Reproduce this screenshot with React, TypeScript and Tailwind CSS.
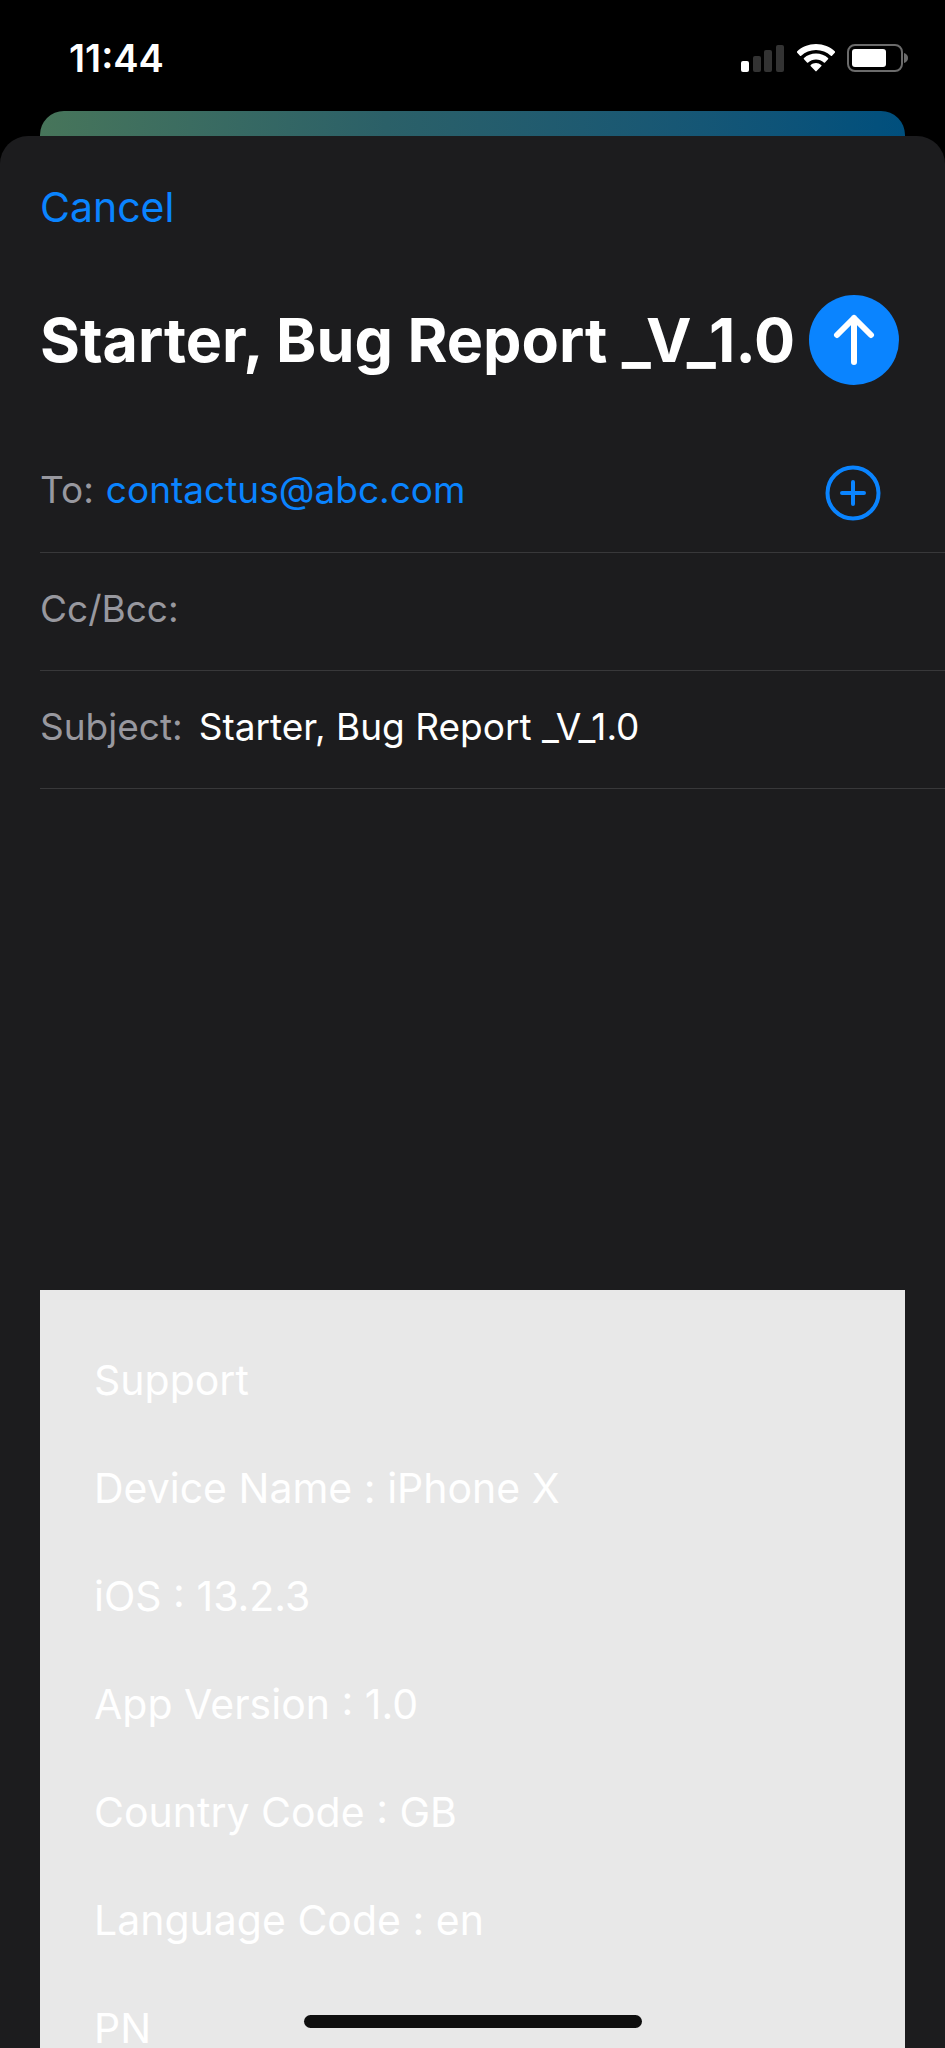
const details = [
  "Support",
  "Device Name : iPhone X",
  "iOS : 13.2.3",
  "App Version : 1.0",
  "Country Code : GB",
  "Language Code : en",
  "PN",
];

function StatusBar() {
  return (
    <header className="flex h-[111px] shrink-0 items-start justify-between pt-9 pr-9 pl-[69px] text-white">
      <time className="text-[38px] leading-[44px] font-semibold">11:44</time>
      <div className="flex items-start gap-3 pt-2">
        <svg width="44" height="28" viewBox="0 0 44 28" role="img" aria-label="Signal">
          <rect x="0" y="17" width="8" height="11" rx="2" fill="#fff" />
          <rect x="12" y="12" width="8" height="16" rx="2" fill="#333" />
          <rect x="23" y="6" width="8" height="22" rx="2" fill="#333" />
          <rect x="35" y="1" width="8" height="27" rx="2" fill="#333" />
        </svg>
        <svg width="38" height="28" viewBox="1 0 38 28" role="img" aria-label="Wi-Fi" fill="#fff">
          <path d="M20 0C12.600 0 5.900 2.800 1 7.400a.8.800 0 0 0 0 1.200l3 3.100a.8.800 0 0 0 1.200 0C9.100 8.100 14.300 6 20 6s10.900 2.100 14.800 5.700a.8.800 0 0 0 1.200 0l3-3.100a.8.800 0 0 0 0-1.200C34.100 2.800 27.400 0 20 0Z" />
          <path d="M20 9.600c-4.600 0-8.800 1.700-12 4.500a.8.800 0 0 0 0 1.200l3 3.100a.8.800 0 0 0 1.200 0c2.100-1.800 4.800-2.900 7.800-2.900s5.700 1.100 7.800 2.900a.8.800 0 0 0 1.200 0l3-3.100a.8.800 0 0 0 0-1.200c-3.200-2.800-7.400-4.500-12-4.500Z" />
          <path d="M20 19.100c-2 0-3.800.7-5.200 1.800a.8.800 0 0 0 0 1.300l4.600 4.900a.8.800 0 0 0 1.200 0l4.600-4.900a.8.800 0 0 0 0-1.300A8.400 8.400 0 0 0 20 19.100Z" />
        </svg>
        <svg width="62" height="29" viewBox="0 0 62 29" role="img" aria-label="Battery">
          <rect x="1" y="1" width="54" height="26" rx="7" fill="none" stroke="#6b6b6b" strokeWidth="2" />
          <rect x="5" y="5" width="34" height="18" rx="3" fill="#fff" />
          <path d="M57 9c2.700.8 4 2.700 4 5s-1.300 4.200-4 5Z" fill="#6b6b6b" />
        </svg>
      </div>
    </header>
  );
}

export default function App() {
  return (
    <div className="relative flex h-screen flex-col overflow-hidden bg-black font-['Inter','Liberation_Sans',sans-serif]">
      <StatusBar />
      <div className="mx-10 h-[25px] shrink-0 rounded-t-3xl bg-linear-to-r from-[#47755a] via-[#2b6068] via-40% to-[#004f7d]" />
      <main className="flex min-h-0 flex-1 flex-col rounded-t-[28px] bg-[#1c1c1e]">
        <div className="flex px-10 pt-[46px]">
          <button type="button" className="text-[41px] leading-[50px] text-[#0a84ff]">
            Cancel
          </button>
        </div>

        <div className="mt-[63px] flex items-center justify-between pr-[46px] pl-10">
          <h1 className="text-[61px] leading-[90px] font-bold whitespace-nowrap text-white">
            Starter, Bug Report _V_1.0
          </h1>
          <button
            type="button"
            aria-label="Send"
            className="flex size-[90px] shrink-0 items-center justify-center rounded-full bg-[#0a84ff]"
          >
            <svg width="42" height="52" viewBox="0 0 42 52" fill="none" stroke="#fff" strokeWidth="6" strokeLinecap="round" strokeLinejoin="round">
              <path d="M21 48V4M4 21 21 4l17 17" />
            </svg>
          </button>
        </div>

        <form className="mt-[49px] ml-10 text-[37px] leading-[44px] text-[#98989f]">
          <div className="flex h-[119px] items-center gap-3 border-b border-[#38383a] pr-16">
            <span className="pb-1.5">To:</span>
            <a href="mailto:contactus@abc.com" className="flex-1 pb-1.5 text-[#0a84ff]">
              contactus@abc.com
            </a>
            <button type="button" aria-label="Add contact" className="text-[#0a84ff]">
              <svg width="56" height="56" viewBox="0 0 56 56" fill="none" stroke="currentColor" strokeWidth="4" strokeLinecap="round">
                <circle cx="28" cy="28" r="25.500" />
                <path d="M28 17v22M17 28h22" />
              </svg>
            </button>
          </div>
          <div className="flex h-[118px] items-center gap-4 border-b border-[#38383a] pr-10 pb-1.5">
            <label htmlFor="cc">Cc/Bcc:</label>
            <input id="cc" type="text" className="min-w-0 flex-1 bg-transparent text-white outline-none" />
          </div>
          <div className="flex h-[118px] items-center gap-4 border-b border-[#38383a] pr-10 pb-1.5">
            <label htmlFor="subject">Subject:</label>
            <input
              id="subject"
              type="text"
              defaultValue="Starter, Bug Report _V_1.0"
              className="min-w-0 flex-1 bg-transparent text-white outline-none"
            />
          </div>
        </form>

        <section className="mx-10 mt-[501px] flex min-h-0 flex-1 flex-col gap-[68px] overflow-hidden bg-[#e8e8e8] px-[54px] pt-[70px] text-[41px] leading-10 text-white">
          {details.map((line) => (
            <p key={line}>{line}</p>
          ))}
        </section>
      </main>
      <div className="absolute inset-x-0 bottom-5 mx-auto h-[13px] w-[338px] rounded-full bg-[#0f0f0f]" />
    </div>
  );
}
